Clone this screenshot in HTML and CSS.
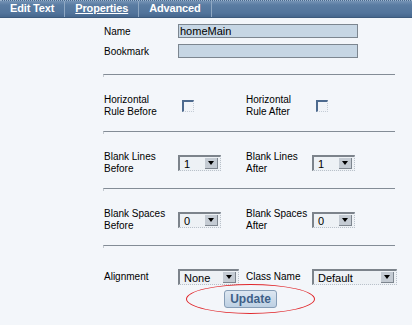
FILE: index.html
```html
<!DOCTYPE html>
<html lang="en">
<head>
    <meta charset="UTF-8">
    <title>Properties</title>
    <link rel="stylesheet" href="styles.css">
</head>
<body>
    <div class="tabbar">
        <span class="tab">Edit Text</span>
        <span class="tab active">Properties</span>
        <span class="tab">Advanced</span>
    </div>

    <div class="panel">
        <div class="names">
            <div class="field">
                <label>Name</label>
                <span class="text-input">homeMain</span>
            </div>
            <div class="field">
                <label>Bookmark</label>
                <span class="text-input"></span>
            </div>
        </div>

        <div class="rule"></div>

        <div class="row">
            <label>Horizontal<br>Rule Before</label>
            <span class="check-cell"><span class="checkbox"></span></span>
            <label>Horizontal<br>Rule After</label>
            <span class="check-cell"><span class="checkbox"></span></span>
        </div>

        <div class="rule"></div>

        <div class="row">
            <label>Blank Lines<br>Before</label>
            <span class="select small"><span class="value">1</span><span class="arrow"></span></span>
            <label>Blank Lines<br>After</label>
            <span class="select small"><span class="value">1</span><span class="arrow"></span></span>
        </div>

        <div class="rule"></div>

        <div class="row">
            <label>Blank Spaces<br>Before</label>
            <span class="select small"><span class="value">0</span><span class="arrow"></span></span>
            <label>Blank Spaces<br>After</label>
            <span class="select small"><span class="value">0</span><span class="arrow"></span></span>
        </div>

        <div class="rule"></div>

        <div class="row single">
            <label>Alignment</label>
            <span class="select medium"><span class="value">None</span><span class="arrow"></span></span>
            <label>Class Name</label>
            <span class="select wide"><span class="value">Default</span><span class="arrow"></span></span>
        </div>

        <div class="actions">
            <span class="btn-wrap">
                <button class="btn">Update</button>
                <span class="highlight"></span>
            </span>
        </div>
    </div>
</body>
</html>
```

FILE: styles.css
```css
* {
    box-sizing: border-box;
    margin: 0;
    padding: 0;
}

body {
    font-family: "Liberation Sans", Arial, sans-serif;
    font-size: 10px;
    color: #000;
    background: #f3f6fa;
    width: 412px;
    height: 325px;
    overflow: hidden;
}

.tabbar {
    height: 18px;
    display: flex;
    align-items: center;
    background: linear-gradient(#7593b5, #5a7ca2 25%, #52749b 75%, #46678d);
    border-top: 1px dotted #9fb6ce;
    border-bottom: 1px solid #3c5a7c;
}

.tab {
    color: #fff;
    font-weight: bold;
    font-size: 11px;
    letter-spacing: -0.15px;
    padding: 0 10px;
    height: 16px;
    line-height: 15px;
    border-right: 1px solid #8ea7c2;
}

.tab.active {
    text-decoration: underline;
}

.panel {
    margin-left: 103px;
    width: 292px;
    padding-top: 6px;
}

.names {
    padding-bottom: 10px;
}

.field {
    display: flex;
    align-items: center;
    height: 14px;
    margin-bottom: 6px;
}

.field label {
    width: 75px;
    padding-left: 1px;
}

.text-input {
    width: 180px;
    height: 14px;
    background: #c6d6e4;
    border: 1px solid #7c8690;
    line-height: 12px;
    font-size: 11px;
    padding-left: 1px;
}

.rule {
    height: 3px;
    margin-bottom: -2px;
    border-top: 1px solid #838c96;
    border-left: 1px solid #c2c8ce;
}

.row {
    display: grid;
    grid-template-columns: 75px 67px 67px auto;
    align-items: center;
    line-height: 12px;
    padding: 19px 0 13px;
}

.row label {
    padding-left: 1px;
}

.row.single {
    padding: 23px 0 0;
}

.check-cell {
    padding-left: 4px;
}

.checkbox {
    display: block;
    width: 12px;
    height: 12px;
    border-top: 2px solid #4d6a8e;
    border-left: 2px solid #4d6a8e;
    border-right: 1px dotted #c4ccd6;
    border-bottom: 1px dotted #c4ccd6;
    background: #f1f4f8;
}

.select {
    display: flex;
    align-items: center;
    height: 16px;
    background: #edf1f5;
    border-top: 2px solid #7c838b;
    border-left: 2px solid #7c838b;
    border-right: 1px dotted #b9c1ca;
    border-bottom: 1px dotted #b9c1ca;
    font-size: 11px;
}

.select.small {
    width: 43px;
}

.select.medium {
    width: 61px;
}

.select.wide {
    width: 85px;
}

.select .value {
    flex: 1;
    padding-left: 4px;
    line-height: 12px;
}

.arrow {
    width: 13px;
    height: 11px;
    margin-right: 2px;
    background: #c4cbd3;
    border-right: 1px solid #7d858e;
    border-bottom: 1px solid #7d858e;
    position: relative;
}

.arrow::after {
    content: "";
    position: absolute;
    left: 3px;
    top: 3px;
    border-left: 3.5px solid transparent;
    border-right: 3.5px solid transparent;
    border-top: 4px solid #000;
}

.actions {
    display: flex;
    padding-left: 121px;
    padding-top: 5px;
}

.btn-wrap {
    position: relative;
}

.btn {
    width: 53px;
    height: 18px;
    font-family: "Liberation Sans", Arial, sans-serif;
    font-size: 12px;
    font-weight: bold;
    color: #3f6088;
    background: linear-gradient(#dde7f1, #bdd0e3);
    border: 1px solid #869db6;
    border-radius: 3px;
}

.highlight {
    position: absolute;
    left: -38px;
    top: -6px;
    width: 129px;
    height: 30px;
    border: 1px solid #e0262a;
    border-radius: 50%;
}
```
